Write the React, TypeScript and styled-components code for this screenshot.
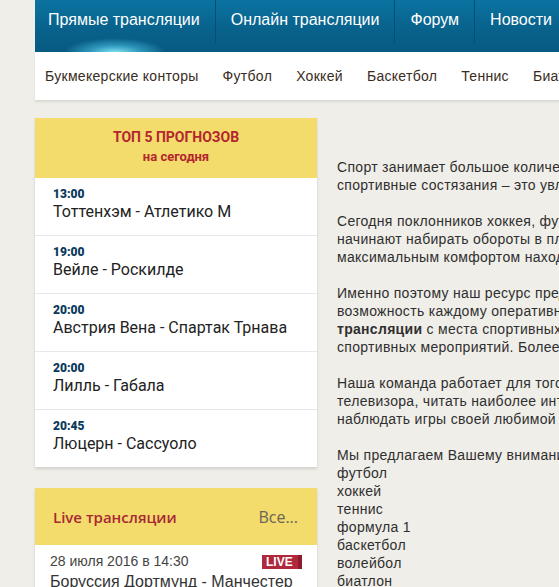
import styled, { createGlobalStyle } from "styled-components";

const GlobalStyle = createGlobalStyle`
  html, body {
    margin: 0;
    padding: 0;
    background: #efeee9;
    overflow: hidden;
  }
  body {
    font-family: "Liberation Sans", Arial, sans-serif;
  }
`;

const Page = styled.div`
  width: 1100px;
  padding-left: 35px;
`;

const TopBar = styled.nav`
  display: flex;
  height: 52px;
  background: linear-gradient(180deg, #0b73a1 0%, #08628c 55%, #075a81 100%);
  overflow: hidden;
`;

const TopItem = styled.a<{ $active?: boolean; $first?: boolean }>`
  position: relative;
  display: flex;
  align-items: center;
  height: 43px;
  padding: 0 15px 3px ${(p) => (p.$first ? "13px" : "15px")};
  box-sizing: border-box;
  border-right: 1px solid #064f72;
  color: #ffffff;
  font-size: 16px;
  text-decoration: none;
  white-space: nowrap;

  &::after {
    content: "";
    display: ${(p) => (p.$active ? "block" : "none")};
    position: absolute;
    left: calc(50% - 62px);
    top: 38px;
    width: 104px;
    height: 30px;
    background: radial-gradient(
      ellipse at center,
      rgba(140, 240, 252, 0.95) 0%,
      rgba(80, 200, 235, 0.55) 35%,
      rgba(20, 120, 170, 0) 70%
    );
  }
`;

const SubBar = styled.nav`
  display: flex;
  align-items: center;
  gap: 24px;
  height: 48px;
  padding-left: 10px;
  background: #ffffff;
  box-shadow: 0 2px 2px rgba(0, 0, 0, 0.09);
`;

const SubItem = styled.a`
  color: #3a2c22;
  font-size: 14px;
  letter-spacing: 0.3px;
  text-decoration: none;
  white-space: nowrap;
`;

const Body = styled.div`
  display: flex;
  gap: 20px;
  margin-top: 18px;
  align-items: flex-start;
`;

const Sidebar = styled.aside`
  flex: none;
  width: 282px;
  display: flex;
  flex-direction: column;
  gap: 21px;
`;

const Card = styled.section`
  background: #ffffff;
  box-shadow: 0 2px 3px rgba(0, 0, 0, 0.13);
`;

const ForecastHead = styled.div`
  height: 60px;
  display: flex;
  flex-direction: column;
  align-items: center;
  justify-content: center;
  background: #f3db6c;
  color: #b3262f;
  font-family: Roboto, "Noto Sans", sans-serif;
  font-weight: 700;
`;

const HeadTitle = styled.div`
  font-size: 14px;
  line-height: 20px;
  margin-top: -2px;
`;

const HeadSub = styled.div`
  font-size: 13px;
  line-height: 20px;
`;

const ForecastRow = styled.div`
  height: 57px;
  padding: 9px 0 0 18px;
  box-sizing: border-box;
  font-family: Roboto, "Noto Sans", sans-serif;

  & + & {
    border-top: 1px solid #e8e8e8;
    height: 58px;
  }
`;

const Time = styled.div`
  font-size: 12px;
  line-height: 15px;
  font-weight: 900;
  color: #0b3a5c;
`;

const Match = styled.div`
  font-size: 16px;
  line-height: 19px;
  color: #222222;
`;

const LiveHead = styled.div`
  height: 57px;
  display: flex;
  align-items: center;
  justify-content: space-between;
  padding: 0 19px 0 18px;
  background: #f3db6c;
  font-family: "Open Sans", sans-serif;
`;

const LiveTitle = styled.span`
  color: #a82836;
  font-size: 15px;
  font-weight: 600;
`;

const AllLink = styled.a`
  color: #666659;
  font-size: 16px;
`;

const LiveItem = styled.div`
  padding: 8px 15px 8px 15px;
`;

const LiveMeta = styled.div`
  display: flex;
  align-items: center;
  justify-content: space-between;
`;

const LiveDate = styled.span`
  color: #444444;
  font-size: 14px;
  line-height: 16px;
`;

const LiveBadge = styled.span`
  display: inline-flex;
  align-items: center;
  width: 40px;
  height: 14px;
  padding-left: 4px;
  box-sizing: border-box;
  background: #b0283c;
  border-right: 4px solid #8a1c2b;
  color: #ffffff;
  font-size: 12px;
  font-weight: 700;
  margin-top: 1px;
`;

const LiveMatch = styled.div`
  color: #333333;
  font-size: 16px;
  line-height: 20px;
  margin-top: 3px;
`;

const Main = styled.main`
  flex: 1;
  padding-top: 40px;
  color: #2f2f2f;
  font-size: 14px;
  letter-spacing: 0.3px;
  line-height: 18px;
  white-space: nowrap;
`;

const Para = styled.p<{ $tight?: boolean }>`
  margin: 0 0 ${(p) => (p.$tight ? "0" : "18px")};
`;

const SportList = styled.div``;

const topNav = ["Прямые трансляции", "Онлайн трансляции", "Форум", "Новости", "Прогнозы"];
const subNav = [
  "Букмекерские конторы",
  "Футбол",
  "Хоккей",
  "Баскетбол",
  "Теннис",
  "Биатлон",
  "Формула 1",
];
const forecasts = [
  { time: "13:00", match: "Тоттенхэм - Атлетико М" },
  { time: "19:00", match: "Вейле - Роскилде" },
  { time: "20:00", match: "Австрия Вена - Спартак Трнава" },
  { time: "20:00", match: "Лилль - Габала" },
  { time: "20:45", match: "Люцерн - Сассуоло" },
];
const sports = ["футбол", "хоккей", "теннис", "формула 1", "баскетбол", "волейбол", "биатлон"];

const App = () => {
  return (
    <Page>
      <GlobalStyle />
      <TopBar>
        {topNav.map((t, i) => (
          <TopItem key={t} href="#" $first={i === 0} $active={i === 0}>
            {t}
          </TopItem>
        ))}
      </TopBar>
      <SubBar>
        {subNav.map((t) => (
          <SubItem key={t} href="#">
            {t}
          </SubItem>
        ))}
      </SubBar>
      <Body>
        <Sidebar>
          <Card>
            <ForecastHead>
              <HeadTitle>ТОП 5 ПРОГНОЗОВ</HeadTitle>
              <HeadSub>на сегодня</HeadSub>
            </ForecastHead>
            {forecasts.map((f, i) => (
              <ForecastRow key={i}>
                <Time>{f.time}</Time>
                <Match>{f.match}</Match>
              </ForecastRow>
            ))}
          </Card>
          <Card>
            <LiveHead>
              <LiveTitle>Live трансляции</LiveTitle>
              <AllLink>Все...</AllLink>
            </LiveHead>
            <LiveItem>
              <LiveMeta>
                <LiveDate>28 июля 2016 в 14:30</LiveDate>
                <LiveBadge>LIVE</LiveBadge>
              </LiveMeta>
              <LiveMatch>Боруссия Дортмунд - Манчестер Юнайтед</LiveMatch>
            </LiveItem>
          </Card>
        </Sidebar>
        <Main>
          <Para>
            Спорт занимает большое количество времени в жизни современного человека, а
            <br />
            спортивные состязания – это увлекательное зрелище для миллионов болельщиков.
          </Para>
          <Para>
            Сегодня поклонников хоккея, футбола, тенниса и других видов спорта, которые
            <br />
            начинают набирать обороты в плане популярности, интересует возможность с
            <br />
            максимальным комфортом находиться в курсе всех событий.
          </Para>
          <Para>
            Именно поэтому наш ресурс предоставляет уникальную
            <br />
            возможность каждому оперативно получать информацию и смотреть онлайн
            <br />
            <b>трансляции</b> с места спортивных событий, а также следить за ходом
            <br />
            спортивных мероприятий. Более того, все трансляции доступны бесплатно.
          </Para>
          <Para>
            Наша команда работает для того, чтобы вы могли смотреть матчи без
            <br />
            телевизора, читать наиболее интересные новости и
            <br />
            наблюдать игры своей любимой команды в любое время.
          </Para>
          <Para $tight>Мы предлагаем Вашему вниманию трансляции по следующим видам спорта:</Para>
          <SportList>
            {sports.map((s) => (
              <div key={s}>{s}</div>
            ))}
          </SportList>
        </Main>
      </Body>
    </Page>
  );
};

export default App;
